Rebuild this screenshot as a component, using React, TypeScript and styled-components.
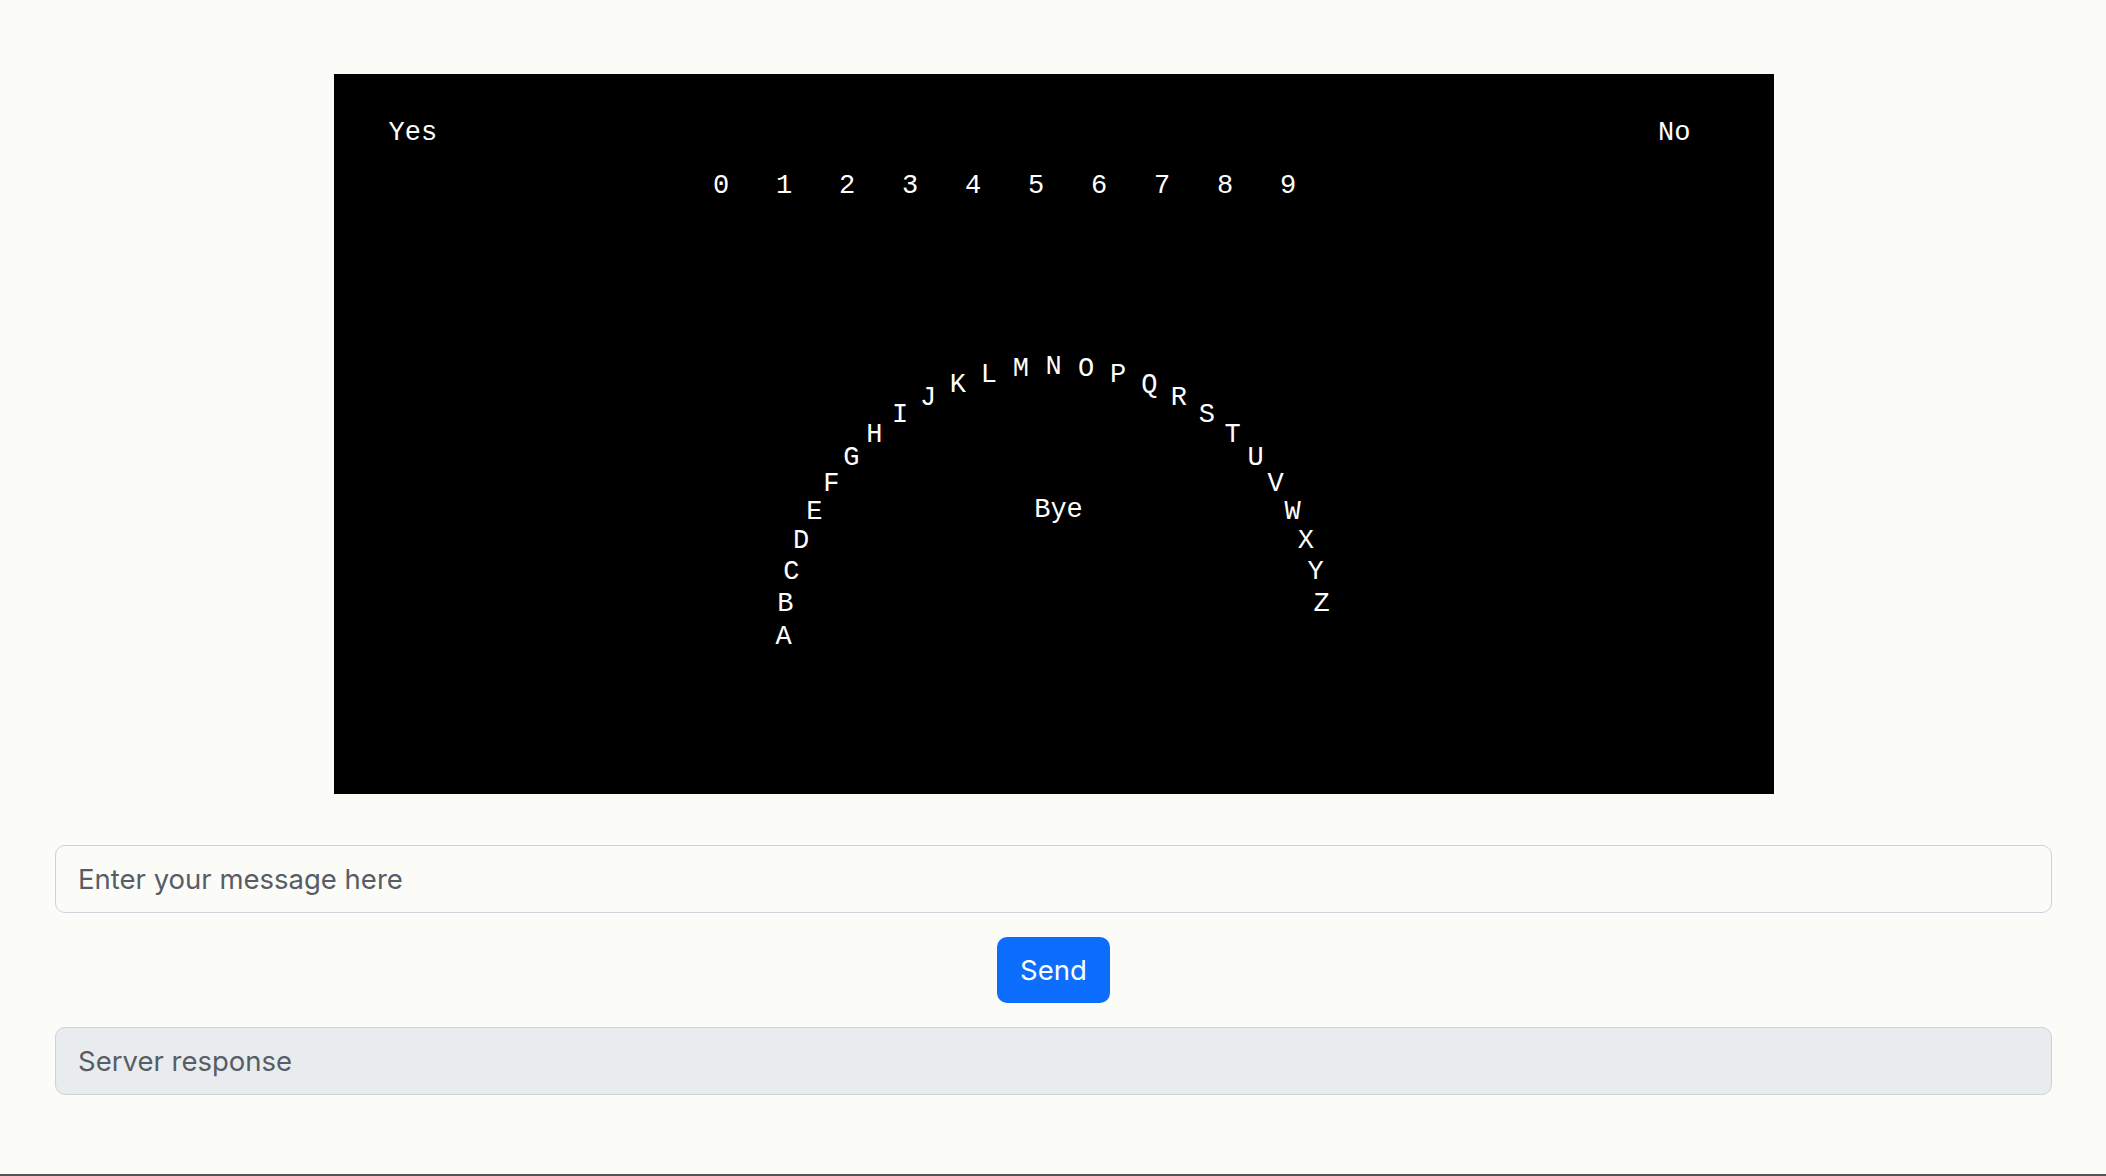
import styled, { createGlobalStyle } from "styled-components";

const GlobalStyle = createGlobalStyle`
  html, body {
    margin: 0;
    padding: 0;
    background: #fbfbf7;
  }
  * { box-sizing: border-box; }
`;

const LETTERS = "ABCDEFGHIJKLMNOPQRSTUVWXYZ".split("");
const DIGITS = "0123456789".split("");

// arc of the alphabet, measured off the board
const ARC_CX = 720;
const ARC_CY = 561;
const ARC_R = 270;
const GLYPH_MID = 11;

const Page = styled.div`
  min-height: 100vh;
  display: flex;
  flex-direction: column;
  padding: 74px 54px 0 55px;
  font-family: Inter, "Liberation Sans", Arial, sans-serif;
`;

const Board = styled.div`
  position: relative;
  width: 1440px;
  height: 720px;
  margin: 0 auto;
  background: #000;
  color: #fff;
  font-family: "Courier New", Courier, "Nimbus Mono PS", FreeMono,
    "Liberation Mono", monospace;
  font-size: 27px;
  line-height: 27px;
`;

const Answer = styled.span<{ $side: "left" | "right" }>`
  position: absolute;
  top: 46px;
  ${({ $side }) => ($side === "left" ? "left: 55px;" : "right: 83px;")}
`;

const DigitRow = styled.div`
  position: absolute;
  top: 99px;
  left: 356px;
  display: flex;
`;

const Digit = styled.span`
  width: 63px;
  text-align: center;
`;

const Letter = styled.span`
  position: absolute;
  transform: translateX(-50%);
`;

const Bye = styled.span`
  position: absolute;
  top: 423px;
  left: 725px;
  transform: translateX(-50%);
`;

const Form = styled.div`
  display: flex;
  flex-direction: column;
  gap: 24px;
  margin-top: 51px;
`;

const MessageInput = styled.input<{ $disabled?: boolean }>`
  width: 100%;
  height: 68px;
  padding: 0 22px;
  border: 1px solid #cdd2d8;
  border-radius: 10px;
  background: ${({ $disabled }) => ($disabled ? "#e9ecef" : "transparent")};
  font-family: inherit;
  font-size: 27.5px;
  color: #212529;
  outline: none;

  &::placeholder {
    color: #575d66;
    opacity: 1;
  }
`;

const SendRow = styled.div`
  display: flex;
  justify-content: center;
`;

const SendButton = styled.button`
  height: 66px;
  padding: 0 23px;
  border: none;
  border-radius: 10px;
  background: #0d6efd;
  color: #fff;
  font-family: inherit;
  font-size: 27.5px;
  cursor: pointer;
`;

const BottomEdge = styled.div`
  margin: auto -54px 0 -55px;
  height: 2px;
  background: #55565a;
`;

export default function App() {
  return (
    <>
      <GlobalStyle />
      <Page>
        <Board>
          <Answer $side="left">Yes</Answer>
          <Answer $side="right">No</Answer>
          <DigitRow>
            {DIGITS.map((d) => (
              <Digit key={d}>{d}</Digit>
            ))}
          </DigitRow>
          {LETTERS.map((l, i) => {
            const a = Math.PI - (i * Math.PI) / 26;
            const x = ARC_CX + ARC_R * Math.cos(a);
            const y = ARC_CY - ARC_R * Math.sin(a);
            return (
              <Letter key={l} style={{ left: x, top: y - GLYPH_MID }}>
                {l}
              </Letter>
            );
          })}
          <Bye>Bye</Bye>
        </Board>
        <Form>
          <MessageInput placeholder="Enter your message here" />
          <SendRow>
            <SendButton>Send</SendButton>
          </SendRow>
          <MessageInput $disabled disabled placeholder="Server response" />
        </Form>
        <BottomEdge />
      </Page>
    </>
  );
}
